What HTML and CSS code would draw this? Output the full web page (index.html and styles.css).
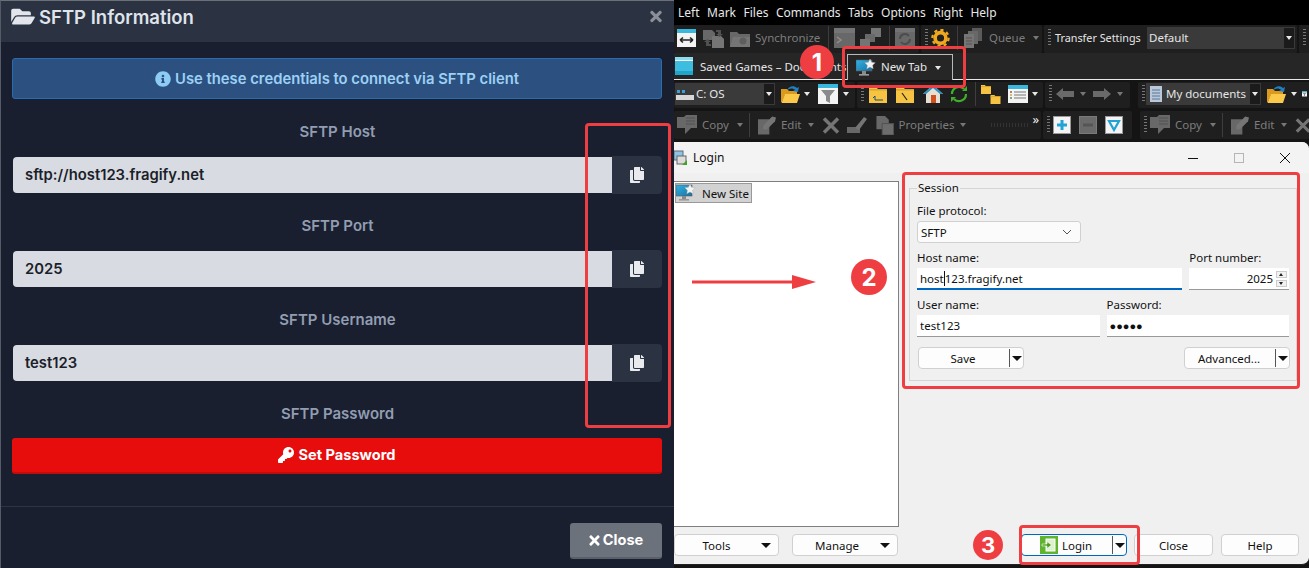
FILE: index.html
```html
<!DOCTYPE html>
<html lang="en">
<head>
<meta charset="utf-8">
<title>SFTP Information</title>
<link rel="stylesheet" href="styles.css">
</head>
<body>
<svg class="defs" width="0" height="0" aria-hidden="true">
  <symbol id="fa-folder" viewBox="0 0 576 512"><path fill="currentColor" d="M572.694 292.093L500.27 416.248A63.997 63.997 0 0 1 444.989 448H45.025c-18.523 0-30.064-20.093-20.731-36.093l72.424-124.155A64 64 0 0 1 152 256h399.964c18.523 0 30.064 20.093 20.73 36.093zM152 224h328v-48c0-26.51-21.49-48-48-48H272l-64-64H48C21.49 64 0 85.49 0 112v278.046l69.077-118.418C86.214 242.25 117.989 224 152 224z"/></symbol>
  <symbol id="fa-copy" viewBox="0 0 448 512"><path fill="currentColor" d="M320 448v40c0 13.255-10.745 24-24 24H24c-13.255 0-24-10.745-24-24V120c0-13.255 10.745-24 24-24h72v296c0 30.879 25.121 56 56 56h168zm0-344V0H152c-13.255 0-24 10.745-24 24v368c0 13.255 10.745 24 24 24h272c13.255 0 24-10.745 24-24V128H344c-13.2 0-24-10.8-24-24zm120.971-31.029L375.029 7.029A24 24 0 0 0 358.059 0H352v96h96v-6.059a24 24 0 0 0-7.029-16.97z"/></symbol>
  <symbol id="fa-key" viewBox="0 0 512 512"><path fill="currentColor" d="M512 176.001C512 273.203 433.202 352 336 352c-11.22 0-22.19-1.062-32.827-3.069l-24.012 27.014A23.999 23.999 0 0 1 261.223 384H224v40c0 13.255-10.745 24-24 24h-40v40c0 13.255-10.745 24-24 24H24c-13.255 0-24-10.745-24-24v-78.059c0-6.365 2.529-12.47 7.029-16.971l161.802-161.802C163.108 213.814 160 195.271 160 176 160 78.798 238.797.001 335.999 0 433.488-.001 512 78.511 512 176.001zM336 128c0 26.51 21.49 48 48 48s48-21.49 48-48-21.49-48-48-48-48 21.49-48 48z"/></symbol>
  <symbol id="fa-times" viewBox="0 0 352 512"><path fill="currentColor" d="M242.72 256l100.07-100.07c12.28-12.28 12.28-32.19 0-44.48l-22.24-22.24c-12.28-12.28-32.19-12.28-44.48 0L176 189.28 75.93 89.21c-12.28-12.28-32.19-12.28-44.48 0L9.21 111.45c-12.28 12.28-12.28 32.19 0 44.48L109.28 256 9.21 356.07c-12.28 12.28-12.28 32.19 0 44.48l22.24 22.24c12.28 12.28 32.2 12.28 44.48 0L176 322.72l100.07 100.07c12.28 12.28 32.2 12.28 44.48 0l22.24-22.24c12.28-12.28 12.28-32.19 0-44.48L242.72 256z"/></symbol>
  <symbol id="fa-info" viewBox="0 0 512 512"><path fill="currentColor" d="M256 8C119.043 8 8 119.083 8 256c0 136.997 111.043 248 248 248s248-111.003 248-248C504 119.083 392.957 8 256 8zm0 110c23.196 0 42 18.804 42 42s-18.804 42-42 42-42-18.804-42-42 18.804-42 42-42zm56 254c0 6.627-5.373 12-12 12h-88c-6.627 0-12-5.373-12-12v-24c0-6.627 5.373-12 12-12h12v-64h-12c-6.627 0-12-5.373-12-12v-24c0-6.627 5.373-12 12-12h64c6.627 0 12 5.373 12 12v100h12c6.627 0 12 5.373 12 12v24z"/></symbol>
  <symbol id="i-site" viewBox="0 0 20 18"><defs><linearGradient id="scr" x1="0" y1="0" x2="1" y2="1"><stop offset="0" stop-color="#2fb4e6"/><stop offset="1" stop-color="#1b6f9f"/></linearGradient></defs><rect x="0" y="1" width="16" height="11" fill="url(#scr)" stroke="#5a5a5a" stroke-width=".6"/><rect x="6" y="12" width="4" height="3" fill="#8a8a8a"/><rect x="3" y="15" width="10" height="1.600" fill="#9a9a9a"/><path d="M14 0l1.600 3.200 3.600.5-2.600 2.500.6 3.500-3.200-1.700-3.200 1.700.6-3.500-2.600-2.500 3.600-.5z" fill="#f3f3f3" stroke="#aaa" stroke-width=".4"/></symbol>
  <symbol id="i-ofolder" viewBox="0 0 20 20"><path d="M1 5h6l2 2h8v4H5L2 18H1z" fill="#d99a1e"/><path d="M5 10h15l-3 9H1.500z" fill="#fbc94a"/><path d="M7 6c2-4 7-5 10-2l2-1-1 5-5-1 2-1c-2-2-5-2-8 0z" fill="#1f7fc4"/></symbol>
  <symbol id="i-filter" viewBox="0 0 20 20"><rect width="20" height="20" fill="#f4f4f4"/><rect width="20" height="4" fill="#39b7dd"/><path d="M3 6h14l-5 6v7l-4-2v-5z" fill="#8b8b8b"/></symbol>
  <symbol id="i-yfolder" viewBox="0 0 18 18"><path d="M0 2h7l2 2h9v14H0z" fill="#f6c343"/><rect y="4" width="18" height="1.500" fill="#dca52b"/></symbol>
  <symbol id="i-sync" viewBox="0 0 21 20"><path d="M0 2h9l3 3v7H0z" fill="#686868"/><path d="M9 8h9l3 3v9H9z" fill="#757575"/><path d="M13 2h5v4h2l-3.500 3L13 6h2V4h-2zM8 18H3v-4H1l3.500-3L8 14H6v2h2z" fill="#505050"/></symbol>
  <symbol id="i-gfolder" viewBox="0 0 20 20"><path d="M0 4h7l2 2h11v13H0z" fill="#686868"/><path d="M3 9h17v10H0z" fill="#757575"/><circle cx="13" cy="13" r="3.500" fill="#5e5e5e"/></symbol>
  <symbol id="i-term" viewBox="0 0 21 20"><rect width="21" height="20" fill="#686868"/><rect width="21" height="5" fill="#757575"/><path d="M3 9l4 3-4 3" fill="none" stroke="#8e8e8e" stroke-width="1.500"/></symbol>
  <symbol id="i-stairs" viewBox="0 0 21 20"><path d="M11 0h10v9H11z" fill="#757575"/><path d="M5 6h10v8H5z" fill="#686868"/><path d="M0 11h10v9H0z" fill="#757575"/></symbol>
  <symbol id="i-ring" viewBox="0 0 20 20"><rect width="20" height="20" fill="#686868"/><rect width="20" height="4" fill="#727272"/><path d="M5 11a5 5 0 0 1 9-3M15 11a5 5 0 0 1-9 3" fill="none" stroke="#4c4c4c" stroke-width="2"/></symbol>
  <symbol id="i-stack" viewBox="0 0 18 20"><path d="M8 0h10v13H8z" fill="#5a5a5a"/><path d="M4 3h10v13H4z" fill="#686868"/><path d="M0 6h10v14H0z" fill="#757575"/><path d="M2 10h6M2 13h6M2 16h6" stroke="#555"/></symbol>
  <symbol id="i-bubble" viewBox="0 0 20 20"><path d="M0 2h7l2-2h11v13h-6l-6 6v-6H0z" fill="#686868"/><path d="M9 3h9M9 6h9M9 9h9" stroke="#505050"/></symbol>
  <symbol id="i-edit" viewBox="0 0 19 19"><path d="M0 3h12v16H0z" fill="#686868"/><path d="M5 13l1-4 9-9 4 1-1 4-9 9z" fill="#757575"/></symbol>
  <symbol id="i-x" viewBox="0 0 18 18"><path d="M2 2l14 14M16 2L2 16" stroke="#757575" stroke-width="3.500"/></symbol>
  <symbol id="i-broom" viewBox="0 0 20 18"><path d="M0 11h13v6H0z" fill="#686868"/><path d="M8 12L17 1l3 2-8 11z" fill="#757575"/></symbol>
  <symbol id="i-props" viewBox="0 0 18 20"><path d="M0 0h9l4 4v10H0z" fill="#686868"/><rect x="6" y="8" width="12" height="12" fill="#6c6c6c" stroke="#505050"/></symbol>
  <symbol id="i-login" viewBox="0 0 18 18"><rect width="18" height="18" fill="#5fb42d"/><rect x="6" y="3" width="9" height="12" fill="#dff2cf" stroke="#fff"/><path d="M2 8h5V5.500L11.500 9 7 12.500V10H2z" fill="#4d9f20" stroke="#fff" stroke-width=".6"/></symbol>
</svg>

<main class="modal">
  <header class="modal-head">
    <h1 class="modal-title"><svg class="ico-title"><use href="#fa-folder"/></svg>SFTP Information</h1>
    <svg class="ico-x"><use href="#fa-times"/></svg>
  </header>
  <section class="modal-body">
    <div class="alert"><svg class="ico-info"><use href="#fa-info"/></svg>Use these credentials to connect via SFTP client</div>
    <div class="field-label">SFTP Host</div>
    <div class="field"><div class="field-val">sftp://host123.fragify.net</div><button class="copy-btn"><svg class="ico-copy"><use href="#fa-copy"/></svg></button></div>
    <div class="field-label">SFTP Port</div>
    <div class="field"><div class="field-val">2025</div><button class="copy-btn"><svg class="ico-copy"><use href="#fa-copy"/></svg></button></div>
    <div class="field-label">SFTP Username</div>
    <div class="field"><div class="field-val">test123</div><button class="copy-btn"><svg class="ico-copy"><use href="#fa-copy"/></svg></button></div>
    <div class="field-label">SFTP Password</div>
    <button class="set-pass"><svg class="ico-key"><use href="#fa-key"/></svg>Set Password</button>
  </section>
  <footer class="modal-foot">
    <button class="close-btn"><svg class="ico-close"><use href="#fa-times"/></svg>Close</button>
  </footer>
  <div class="red-box box-copy"></div>
</main>

<div class="app">
  <nav class="menu"><span>Left</span><span>Mark</span><span>Files</span><span>Commands</span><span>Tabs</span><span>Options</span><span>Right</span><span>Help</span></nav>

  <div class="tbar row1">
    <div class="grp g1a">
      <svg class="i19" viewBox="0 0 19 18"><rect width="19" height="18" fill="#f4f4f4"/><rect width="19" height="4" fill="#39b7dd"/><path d="M3 11h13M3 11l3-2.500M3 11l3 2.500M16 11l-3-2.500M16 11l-3 2.500" stroke="#222" stroke-width="1.600" fill="none"/></svg>
      <svg class="i21 m7"><use href="#i-sync"/></svg>
      <svg class="i20 m6"><use href="#i-gfolder"/></svg>
      <span class="dim m5">Synchronize</span>
      <i class="sep m8"></i>
      <svg class="i21 m5"><use href="#i-term"/></svg>
      <svg class="i21 m5"><use href="#i-stairs"/></svg>
      <i class="sep m8"></i>
      <svg class="i20 m5"><use href="#i-ring"/></svg>
    </div>
    <div class="grp g1b">
      <i class="grip"></i>
      <svg class="i19 m3" viewBox="0 0 20 20"><circle cx="10" cy="10" r="6" fill="none" stroke="#f0a91e" stroke-width="4"/><circle cx="10" cy="10" r="9" fill="none" stroke="#f0a91e" stroke-width="2.500" stroke-dasharray="3.500 3.500"/></svg>
      <i class="sep m7"></i>
      <svg class="i18s m6"><use href="#i-stack"/></svg>
      <span class="dim m7">Queue</span>
      <i class="caret dimc m8"></i>
    </div>
    <div class="grp g1c">
      <i class="grip"></i>
      <span class="ts-label">Transfer Settings</span>
      <div class="combo combo-ts"><span>Default</span><b class="combo-btn"><i class="caret"></i></b></div>
    </div>
    <div class="grp g1d"><i class="grip"></i></div>
  </div>

  <div class="tabs">
    <div class="tab-doc"><svg class="i18" viewBox="0 0 18 18"><rect width="18" height="18" fill="#3dbde0"/><rect y="0" width="18" height="3" fill="#8fdcef"/><rect x="0" y="3" width="18" height="1" fill="#f4f4f4"/><rect x="0" y="14" width="18" height="4" fill="#22a3c9"/></svg><span>Saved Games – Documents</span></div>
    <div class="tab-new"><svg class="i18-site"><use href="#i-site"/></svg><span>New Tab</span><i class="caret"></i></div>
  </div>

  <div class="tbar row3">
    <div class="grp g3a">
      <div class="combo combo-drive"><svg class="i17" viewBox="0 0 18 14"><rect y="8" width="18" height="5" fill="#d8d8d8"/><rect x="1" y="3" width="3" height="3" fill="#39a0e0"/><rect x="6" y="3" width="3" height="3" fill="#39a0e0"/></svg><span>C: OS</span><b class="combo-btn"><i class="caret"></i></b></div>
      <svg class="i20 m5"><use href="#i-ofolder"/></svg><i class="caret m4"></i>
      <svg class="i20 m8"><use href="#i-filter"/></svg><i class="caret m5"></i>
    </div>
    <div class="grp g3b">
      <i class="grip"></i>
      <svg class="i17f m5" viewBox="0 0 18 18"><use href="#i-yfolder"/><path d="M6 15V11M6 11l-2 2M6 15h8" stroke="#1a4f6e" fill="none"/></svg>
      <svg class="i17f m9" viewBox="0 0 18 18"><use href="#i-yfolder"/><path d="M6 8l5 7" stroke="#222" stroke-width="1.200"/></svg>
      <svg class="i20 m9" viewBox="0 0 20 20"><path d="M10 1L0 10h3v9h14v-9h3z" fill="#e6e0d2"/><path d="M10 1L0 10h3l7-6 7 6h3z" fill="#2b8fc4"/><rect x="8" y="11" width="5" height="8" fill="#d2501e"/></svg>
      <svg class="i20 m6" viewBox="0 0 20 20"><path d="M3 10a7 7 0 0 1 12-5M17 10a7 7 0 0 1-12 5" fill="none" stroke="#3fae2a" stroke-width="2.200"/><path d="M13 7h5V2zM7 13H2v5z" fill="#3fae2a"/></svg>
      <i class="sep m6"></i>
      <svg class="i20 m5" viewBox="0 0 20 20"><use href="#i-yfolder" width="10" height="10"/><use href="#i-yfolder" x="9" y="10" width="11" height="10"/></svg>
      <svg class="i20 m7" viewBox="0 0 20 18"><rect width="20" height="18" fill="#f4f4f4"/><rect width="20" height="4" fill="#39b7dd"/><path d="M2 7h2M6 7h12M2 10h2M6 10h12M2 13h2M6 13h12" stroke="#777"/><path d="M2 7h2" stroke="#d33"/><path d="M2 10h2" stroke="#ec3"/><path d="M2 13h2" stroke="#3a3"/></svg>
      <i class="caret m4"></i>
    </div>
    <div class="grp g3c">
      <i class="grip"></i>
      <svg class="i18a m4" viewBox="0 0 18 12"><path d="M0 6l7-6v3h11v6H7v3z" fill="#6a6a6a"/></svg><i class="caret dimc m6"></i>
      <svg class="i18a m7" viewBox="0 0 18 12"><path d="M18 6l-7-6v3H0v6h11v3z" fill="#6a6a6a"/></svg><i class="caret dimc m6"></i>
    </div>
    <div class="grp g3d">
      <i class="grip"></i>
      <div class="combo combo-docs"><svg class="i12" viewBox="0 0 12 16"><rect width="12" height="16" fill="#b9c9dc"/><path d="M2 4h8M2 7h8M2 10h8M2 13h8" stroke="#5c7492"/></svg><span>My documents</span></div>
      <b class="combo-btn2"><i class="caret"></i></b>
      <svg class="i20 m5"><use href="#i-ofolder"/></svg><i class="caret m5"></i>
      <svg class="i20 m5 clip5"><use href="#i-filter"/></svg>
    </div>
  </div>

  <div class="tbar row4">
    <div class="grp g4a">
      <svg class="i20 m3"><use href="#i-bubble"/></svg>
      <span class="dim m5">Copy</span><i class="caret dimc m8"></i>
      <i class="sep m6"></i>
      <svg class="i18b m8"><use href="#i-edit"/></svg>
      <span class="dim m5">Edit</span><i class="caret dimc m6"></i>
      <svg class="i18b m8"><use href="#i-x"/></svg>
      <svg class="i20 m7"><use href="#i-broom"/></svg>
      <svg class="i18b m9"><use href="#i-props"/></svg>
      <span class="dim m5">Properties</span><i class="caret dimc m6"></i>
      <i class="dots"></i><span class="more">»</span>
    </div>
    <div class="grp g4b">
      <i class="grip"></i>
      <div class="mini mini-on m3"><svg viewBox="0 0 14 14"><path d="M7 2v10M2 7h10" stroke="#22a3d6" stroke-width="3"/></svg></div>
      <div class="mini mini-off m8"><svg viewBox="0 0 14 14"><path d="M2 7h10" stroke="#555" stroke-width="3"/></svg></div>
      <div class="mini mini-on m8"><svg viewBox="0 0 14 14"><path d="M2 3h10L7 12z" fill="none" stroke="#22a3d6" stroke-width="2.200"/></svg></div>
    </div>
    <div class="grp g4c">
      <i class="grip"></i>
      <svg class="i20 m3"><use href="#i-bubble"/></svg>
      <span class="dim m5">Copy</span><i class="caret dimc m8"></i>
      <i class="sep m6"></i>
      <svg class="i18b m8"><use href="#i-edit"/></svg>
      <span class="dim m5">Edit</span><i class="caret dimc m6"></i>
      <svg class="i18b m8 clip-x"><use href="#i-x"/></svg>
    </div>
  </div>

  <section class="win">
    <div class="win-title">
      <svg class="i16" viewBox="0 0 16 16"><rect x="1" y="1" width="9" height="9" fill="#8cc4e6" stroke="#667"/><rect x="4" y="6" width="9" height="8" fill="#dcdcdc" stroke="#666"/><path d="M9 15l5-5v5z" fill="#45a32a"/></svg>
      <span>Login</span>
      <div class="win-ctrls">
        <svg class="ctl" viewBox="0 0 12 12"><path d="M1 6.500h10" stroke="#111"/></svg>
        <svg class="ctl" viewBox="0 0 12 12"><rect x="1.500" y="1.500" width="9" height="9" fill="none" stroke="#b5b5b5"/></svg>
        <svg class="ctl" viewBox="0 0 12 12"><path d="M1 1l10 10M11 1L1 11" stroke="#111"/></svg>
      </div>
    </div>
    <div class="win-main">
      <div class="side">
        <div class="tree"><div class="tree-item"><svg class="i18-site"><use href="#i-site"/></svg><span>New Site</span></div></div>
      </div>
      <div class="form-wrap">
        <fieldset class="session">
          <legend>Session</legend>
          <label class="lbl">File protocol:</label>
          <div class="select"><span>SFTP</span><svg class="chev" viewBox="0 0 10 6"><path d="M1 1l4 4 4-4" fill="none" stroke="#555"/></svg></div>
          <div class="form-row row-host">
            <div class="col"><label class="lbl">Host name:</label><div class="inp inp-focus">host<i class="cursor"></i>123.fragify.net</div></div>
            <div class="col"><label class="lbl">Port number:</label><div class="inp inp-port"><span>2025</span><span class="spin"><b></b><b class="down"></b></span></div></div>
          </div>
          <div class="form-row row-user">
            <div class="col"><label class="lbl">User name:</label><div class="inp">test123</div></div>
            <div class="col"><label class="lbl">Password:</label><div class="inp inp-pass">●●●●●</div></div>
          </div>
          <div class="form-btns">
            <div class="wbtn split"><span>Save</span><i class="wsep"></i><i class="wcaret"></i></div>
            <div class="wbtn split"><span>Advanced...</span><i class="wsep"></i><i class="wcaret"></i></div>
          </div>
        </fieldset>
      </div>
    </div>
    <div class="win-foot">
      <div class="wbtn drop"><span>Tools</span><i class="wcaret"></i></div>
      <div class="wbtn drop"><span>Manage</span><i class="wcaret"></i></div>
      <div class="wbtn login"><svg class="i18l"><use href="#i-login"/></svg><span>Login</span><i class="wsep"></i><i class="wcaret"></i></div>
      <div class="wbtn plain close-w">Close</div>
      <div class="wbtn plain help-w">Help</div>
    </div>
  </section>

  <div class="badge b1">1</div>
  <div class="red-box box-tab"></div>
  <svg class="arrow" viewBox="0 0 124 14"><path d="M0 7h108" stroke="#ef3e42" stroke-width="3"/><path d="M100 0l24 7-24 7z" fill="#ef3e42"/></svg>
  <div class="badge b2">2</div>
  <div class="red-box box-form"></div>
  <div class="badge b3">3</div>
  <div class="red-box box-login"></div>
</div>
</body>
</html>
```
FILE: styles.css
```css
* { box-sizing: border-box; }
html, body { margin: 0; padding: 0; }
body { width: 1309px; height: 568px; overflow: hidden; display: flex; background: #fff; font-family: "Noto Sans", sans-serif; }
.defs { position: absolute; }
button { font: inherit; border: 0; padding: 0; cursor: pointer; }
svg { display: block; flex: none; }

/* Left modal */
.modal { width: 674px; height: 568px; position: relative; background: #191f2e; border-left: 1px solid #555b66; border-top: 1px solid #6a6f78; display: flex; flex-direction: column; font-family: Inter, Roboto, sans-serif; }
.modal-head { height: 41px; background: #2b3242; display: flex; align-items: center; justify-content: space-between; padding: 0 12px 10px 10px; flex: none; }
.modal-title { margin: 0; display: flex; align-items: center; gap: 4px; font-size: 18.5px; line-height: 24px; font-weight: 600; color: #dfe3ea; }
.ico-title { width: 24px; height: 21px; color: #e2e6ec; }
.ico-x { width: 12px; height: 17px; color: #8a8f99; }
.modal-body { flex: none; height: 464px; padding: 16px 11px 0 11px; }
.alert { width: 650px; height: 41px; border: 1px solid #2a6cb0; border-radius: 3px; background: #2c5180; color: #9cd0f5; display: flex; align-items: center; justify-content: center; gap: 4px; font-size: 14.8px; font-weight: 600; }
.ico-info { width: 16px; height: 16px; color: #8ecbf5; }
.field-label { height: 20px; margin-top: 23px; text-align: center; font-size: 15px; line-height: 20px; font-weight: 600; color: #929db2; }
.field { display: flex; align-items: center; margin-top: 14px; height: 38px; }
.field-val { width: 599px; margin-left: 1px; height: 36px; background: #d9dbe3; border-radius: 4px 0 0 4px; padding: 0 12px; display: flex; align-items: center; font-size: 14.8px; font-weight: 600; color: #1b1f29; }
.copy-btn { width: 50px; height: 38px; background: #2b3242; border-radius: 0 4px 4px 0; display: flex; align-items: center; justify-content: center; }
.ico-copy { width: 14px; height: 16px; color: #e8eaee; }
.field + .field-label { margin-top: 22px; }
.set-pass { display: flex; align-items: center; justify-content: center; gap: 4px; width: 650px; height: 36px; margin-top: 14px; background: #e80d0d; border-bottom: 2px solid #c40b0b; border-radius: 3px; color: #fff; font-size: 14.6px; font-weight: 700; }
.ico-key { width: 16px; height: 16px; color: #fff; }
.modal-foot { border-top: 1px solid #2e3442; flex: 1; display: flex; justify-content: flex-end; align-items: flex-start; padding: 16px 12px 0 0; }
.close-btn { width: 92px; height: 36px; background: #6c727c; border-bottom: 2px solid #5a6069; border-radius: 3px; color: #fff; font-size: 14.6px; font-weight: 700; display: flex; align-items: center; justify-content: center; gap: 3px; }
.ico-close { width: 11px; height: 15px; color: #fff; }

.red-box { position: absolute; border: 3px solid #ef3e42; border-radius: 4px; pointer-events: none; }
.box-copy { left: 584px; top: 122px; width: 86px; height: 305px; }

/* Right app */
.app { width: 635px; height: 568px; position: relative; background: #141414; display: flex; flex-direction: column; color: #e6e6e6; font-size: 11.5px; overflow: hidden; }
.menu { height: 25px; background: #000; display: flex; align-items: center; padding: 0 0 1px 4px; gap: 7.5px; flex: none; color: #e8e8e8; font-size: 12px; }
.tbar { display: flex; flex: none; gap: 2px; background: #141414; overflow: hidden; white-space: nowrap; }
.grp { display: flex; align-items: center; background: #1f1f1f; border-radius: 2px; flex: none; height: 100%; overflow: hidden; }
.grp span { margin-bottom: 2px; }
.row1 { height: 28px; }
.row3 { height: 26px; margin-top: 2px; }
.row1 .grp, .row3 .grp { padding-bottom: 2px; }
.row4 { height: 28px; margin-top: 3px; }
.g1a { width: 245px; padding-left: 3px; }
.g1b { width: 121px; padding-left: 4px; }
.g1c { width: 253px; padding-left: 4px; }
.g1d { width: 40px; padding-left: 4px; }
.g3a { width: 181px; padding-left: 1px; }
.g3b { width: 186px; padding-left: 4px; }
.g3c { width: 85px; padding-left: 4px; }
.g3d { width: 175px; padding-left: 4px; margin-left: 6px; }
.g4a { width: 367px; padding-left: 0; }
.g4b { width: 89px; padding-left: 4px; }
.g4c { width: 175px; padding-left: 4px; margin-left: 6px; }

.dim { color: #7d7d7d; }
.ts-label { width: 87px; margin-left: 4px; flex: none; font-size: 10.8px; white-space: nowrap; }
.grip { width: 3px; height: 18px; flex: none; background: repeating-linear-gradient(to bottom, #777 0 1px, transparent 1px 3px); }
.sep { width: 1px; height: 24px; background: #3d3d3d; flex: none; }
.caret { width: 0; height: 0; flex: none; border-left: 3.5px solid transparent; border-right: 3.5px solid transparent; border-top: 4px solid #e8e8e8; }
.dimc { border-top-color: #777; }
.m3 { margin-left: 3px; } .m4 { margin-left: 4px; } .m5 { margin-left: 5px; } .m6 { margin-left: 6px; }
.m7 { margin-left: 7px; } .m8 { margin-left: 8px; } .m9 { margin-left: 9px; } .m10 { margin-left: 10px; }
.i19 { width: 19px; height: 18px; } .i21 { width: 21px; height: 20px; }
.i18 { width: 18px; height: 18px; } .i20 { width: 20px; height: 20px; }
.i18s { width: 18px; height: 20px; }
.i17 { width: 18px; height: 14px; margin-right: 2px; } .i17f { width: 18px; height: 18px; }
.i18a { width: 18px; height: 12px; } .i18b { width: 18px; height: 19px; } .i12 { width: 12px; height: 16px; margin-right: 4px; }
.i18-site { width: 20px; height: 18px; }
.i16 { width: 16px; height: 16px; margin-left: -1px; }
.i18l { width: 18px; height: 18px; }
.clip5 { width: 5px; }
.clip-x { width: 16px; }

.combo { display: flex; align-items: center; background: #3a3a3a; height: 22px; position: relative; }
.combo-ts { width: 148px; margin-left: 5px; padding-left: 2px; }
.combo-ts .combo-btn, .combo-drive .combo-btn { position: absolute; right: 0; top: 0; }
.combo-btn { width: 12px; height: 22px; background: #1b1b1b; border: 1px solid #3a3a3a; display: flex; align-items: center; justify-content: center; }
.combo-drive { width: 100px; padding-left: 1px; }
.combo-docs { width: 103px; margin-left: 1px; padding-left: 4px; overflow: hidden; white-space: nowrap; }
.combo-btn2 { width: 12px; height: 22px; background: #1b1b1b; border: 1px solid #3a3a3a; display: flex; align-items: center; justify-content: center; flex: none; }

.tabs { height: 27px; flex: none; background: #262626; border-bottom: 1px solid #e8e8e8; display: flex; align-items: flex-end; }
.tab-doc { width: 173px; height: 26px; display: flex; align-items: center; gap: 7px; padding-left: 1px; white-space: nowrap; overflow: hidden; }
.tab-new { width: 106px; height: 26px; background: #262626; border: 1px solid #b9b9b9; border-bottom: 0; display: flex; align-items: center; padding-left: 8px; gap: 5px; position: relative; top: 1px; white-space: nowrap; }
.tab-new span { margin-bottom: 2px; }
.tab-new .caret { margin-left: 3px; }

.dots { width: 38px; height: 4px; margin-left: 25px; background: repeating-linear-gradient(to right, #333 0 1px, transparent 1px 3px); }
.more { color: #eee; font-size: 13px; margin-left: 3px; line-height: 10px; margin-top: -10px; }
.mini { width: 18px; height: 18px; display: flex; align-items: center; justify-content: center; flex: none; }
.mini svg { width: 14px; height: 14px; }
.mini-on { background: #f4f4f4; border: 1px solid #999; }
.mini-off { background: #6a6a6a; border: 1px solid #7a7a7a; }

/* Login window */
.win { position: absolute; left: 0; top: 142px; width: 635px; height: 423px; background: #f0f0f0; border-radius: 0 7px 7px 0; border-bottom: 1px solid #222; display: flex; flex-direction: column; color: #111; }
.win-title { height: 31px; flex: none; background: #f3f3f3; display: flex; align-items: center; gap: 4px; padding-left: 0; font-size: 12px; border-radius: 0 7px 0 0; }
.win-ctrls { margin-left: auto; display: flex; gap: 34px; padding-right: 18px; }
.ctl { width: 12px; height: 12px; }
.win-main { display: flex; flex: 1; min-height: 0; padding-top: 8px; }
.side { width: 225px; flex: none; height: 346px; }
.tree { height: 100%; background: #fff; border: 1px solid #7f7f7f; border-left: 0; padding: 1px 0 0 1px; }
.tree-item { width: 77px; height: 20px; background: #d2d2d2; border: 1px solid #999; display: inline-flex; align-items: center; gap: 6px; }
.form-wrap { flex: 1; padding-left: 10px; }
.session { margin: 0; padding: 0 7px; width: 388px; height: 200px; border: 1px solid #d5d5d5; min-width: 0; }
.session legend { padding: 0 1px; line-height: 14px; font-size: 11.5px; }
.lbl { display: block; height: 15px; line-height: 15px; font-size: 11.5px; white-space: nowrap; }
.session > .lbl { margin-top: 8px; }
.select { width: 164px; height: 22px; margin-top: 3px; background: #fbfbfb; border: 1px solid #d0d0d0; border-radius: 3px; display: flex; align-items: center; justify-content: space-between; padding: 0 8px 0 3px; }
.chev { width: 10px; height: 6px; }
.form-row { display: flex; gap: 7px; }
.row-host { margin-top: 7px; }
.row-host .col:first-child { width: 266px; }
.row-host .col:last-child { width: 100px; }
.row-user { margin-top: 7px; }
.row-user .col { width: 183px; }
.inp { height: 22px; margin-top: 3px; background: #fff; border-bottom: 1px solid #999; display: flex; align-items: center; padding-left: 3px; font-size: 11.5px; white-space: nowrap; }
.inp-focus { border-bottom: 2px solid #0067c0; }
.cursor { width: 1px; height: 15px; background: #111; flex: none; }
.inp-port { justify-content: flex-end; padding-right: 2px; gap: 3px; }
.spin { width: 11px; display: flex; flex-direction: column; gap: 2px; }
.spin b { height: 7px; background: #f2f2f2; border: 1px solid #ccc; position: relative; display: block; }
.spin b::after { content: ""; position: absolute; left: 2px; top: 1px; border-left: 2.5px solid transparent; border-right: 2.5px solid transparent; border-bottom: 3px solid #222; }
.spin b.down::after { border-bottom: 0; border-top: 3px solid #222; }
.inp-pass { font-size: 11px; }
.form-btns { display: flex; justify-content: space-between; margin: 10px -1px 0 1px; }
.wbtn { height: 22px; background: #fdfdfd; border: 1px solid #d0d0d0; border-radius: 4px; display: flex; align-items: center; font-size: 11.5px; flex: none; white-space: nowrap; }
.split { width: 106px; position: relative; padding-right: 16px; justify-content: center; }
.wsep { width: 1px; height: 18px; background: #555; position: absolute; right: 13px; }
.wcaret { width: 0; height: 0; border-left: 5px solid transparent; border-right: 5px solid transparent; border-top: 5px solid #111; position: absolute; right: 1px; }
.win-foot { height: 30px; flex: none; display: flex; align-items: flex-start; }
.drop { width: 105px; position: relative; justify-content: center; padding-right: 20px; }
.drop .wcaret { right: 7px; }
.drop + .drop { margin-left: 13px; width: 106px; padding-right: 16px; }
.login { width: 106px; margin-left: 123px; position: relative; border: 1px solid #0067c0; padding-left: 18px; gap: 4px; }
.close-w { width: 79px; margin-left: 7px; justify-content: center; }
.help-w { width: 78px; margin-left: 8px; justify-content: center; }

/* Annotations */
.badge { position: absolute; border-radius: 50%; background: #ef3e42; color: #fff; display: flex; align-items: center; justify-content: center; font-family: Inter, sans-serif; font-weight: 700; }
.b1 { left: 126px; top: 45px; width: 34px; height: 34px; font-size: 24px; }
.b2 { left: 177px; top: 259px; width: 36px; height: 36px; font-size: 24px; }
.b3 { left: 299px; top: 530px; width: 30px; height: 30px; font-size: 22px; }
.box-tab { left: 168px; top: 46px; width: 124px; height: 42px; }
.box-form { left: 228px; top: 172px; width: 398px; height: 217px; }
.box-login { left: 345px; top: 525px; width: 121px; height: 40px; }
.arrow { position: absolute; left: 18px; top: 275px; width: 124px; height: 14px; }
```
